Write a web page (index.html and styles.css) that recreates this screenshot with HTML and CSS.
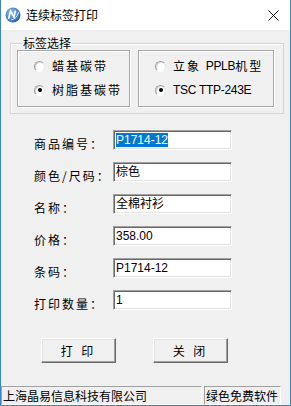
FILE: index.html
```html
<!DOCTYPE html>
<html lang="zh-CN">
<head>
  <meta charset="UTF-8">
  <title>连续标签打印</title>
  <link rel="stylesheet" href="styles.css">
</head>
<body>
  <div class="window">
    <div class="titlebar">
      <svg class="app-icon" width="16" height="16" viewBox="0 0 16 16">
        <defs>
          <radialGradient id="ball" cx="40%" cy="35%" r="70%">
            <stop offset="0" stop-color="#8fc3f0"/>
            <stop offset="1" stop-color="#1c5fb5"/>
          </radialGradient>
        </defs>
        <circle cx="8" cy="8" r="7.5" fill="url(#ball)"/>
        <path d="M3.5 12 L5.5 4 L9 10 L10.5 3.5" fill="none" stroke="#fff" stroke-width="1.6"/>
        <path d="M6 13 Q12 12 13.5 5" fill="none" stroke="#dbeeff" stroke-width="1"/>
      </svg>
      <span class="title">连续标签打印</span>
      <svg class="close" width="11" height="11" viewBox="0 0 11 11">
        <path d="M0.5 0.5 L10.5 10.5 M10.5 0.5 L0.5 10.5" stroke="#111" stroke-width="1"/>
      </svg>
    </div>

    <div class="client">
      <fieldset class="group">
        <legend>标签选择</legend>
        <div class="group-row">
          <div class="radio-box left">
            <div class="radio"><span class="dot"></span><span class="cn">蜡基碳带</span></div>
            <div class="radio"><span class="dot on"></span><span class="cn">树脂基碳带</span></div>
          </div>
          <div class="radio-box right">
            <div class="radio"><span class="dot"></span><span class="cn">立象 </span><span class="en">PPLB</span><span class="cn">机型</span></div>
            <div class="radio"><span class="dot on"></span><span class="en">TSC TTP-243E</span></div>
          </div>
        </div>
      </fieldset>

      <div class="form">
        <label>商品编号：</label>
        <div class="field"><span class="selected">P1714-12</span></div>
        <label>颜色/尺码：</label>
        <div class="field">棕色</div>
        <label>名称：</label>
        <div class="field">全棉衬衫</div>
        <label>价格：</label>
        <div class="field">358.00</div>
        <label>条码：</label>
        <div class="field">P1714-12</div>
        <label>打印数量：</label>
        <div class="field">1</div>
      </div>

      <div class="buttons">
        <button class="btn">打 印</button>
        <button class="btn">关 闭</button>
      </div>

      <div class="statusbar">
        <div class="panel company">上海晶易信息科技有限公司</div>
        <div class="panel note">绿色免费软件</div>
      </div>
    </div>
  </div>
</body>
</html>
```

FILE: styles.css
```css
html, body {
  margin: 0;
  padding: 0;
  background: #f0f0f0;
  font-family: "Liberation Sans", "Noto Sans CJK SC", sans-serif;
  font-size: 12px;
  color: #000;
}

.window {
  width: 291px;
  height: 406px;
  box-sizing: border-box;
  border: 1px solid #3a86c8;
  border-top: none;
  display: flex;
  flex-direction: column;
  background: #f0f0f0;
}

.titlebar {
  height: 30px;
  background: #fff;
  display: flex;
  align-items: center;
  padding-left: 4px;
}

.app-icon {
  margin-right: 5px;
}

.title {
  font-size: 12px;
  line-height: 16px;
  font-family: "Noto Sans CJK SC", sans-serif;
}

.close {
  margin-left: auto;
  margin-right: 11px;
}

.client {
  flex: 1;
  display: flex;
  flex-direction: column;
}

.group {
  margin: 6px 6px 0 9px;
  padding: 0 9px 6px 6px;
  border: 1px solid #d4d4d4;
  box-shadow: inset 1px 1px #fff;
}

.group legend {
  padding: 0 1px;
  margin-left: 5px;
  font-family: "Noto Sans CJK SC", sans-serif;
  line-height: 14px;
}

.group-row {
  display: flex;
  gap: 8px;
}

.radio-box {
  height: 57px;
  box-sizing: border-box;
  border: 1px solid #a8a8a8;
  box-shadow: 1px 1px #fff, inset 1px 1px #fff;
  padding: 7px 0 0 16px;
  display: flex;
  flex-direction: column;
  gap: 8px;
}

.radio-box.left {
  width: 113px;
}

.radio-box.right {
  flex: 1;
}

.radio {
  display: flex;
  align-items: center;
  height: 16px;
  white-space: pre;
}

.dot {
  width: 11px;
  height: 11px;
  box-sizing: border-box;
  border-radius: 50%;
  border: 1px solid;
  border-color: #a0a0a0 #e6e6e6 #fff #a0a0a0;
  background: #fff;
  box-shadow: inset 1px 1px #d8d8d8;
  margin-right: 7px;
  display: flex;
  align-items: center;
  justify-content: center;
}

.dot.on::after {
  content: "";
  width: 4px;
  height: 4px;
  border-radius: 50%;
  background: #000;
}

.cn {
  font-family: "Noto Sans CJK SC", sans-serif;
  font-size: 12px;
  letter-spacing: 2px;
  line-height: 16px;
}

.en {
  font-size: 12px;
  line-height: 16px;
  letter-spacing: -0.3px;
}

.form {
  display: grid;
  grid-template-columns: 79px 119px;
  grid-auto-rows: 20px;
  row-gap: 12px;
  margin-top: 16px;
  padding-left: 33px;
}

.form label {
  font-family: "Noto Sans CJK SC", sans-serif;
  letter-spacing: 2px;
  line-height: 14px;
  padding-top: 7px;
  white-space: nowrap;
}

.field {
  box-sizing: border-box;
  height: 20px;
  background: #fff;
  border: 1px solid;
  border-color: #a0a0a0 #fff #fff #a0a0a0;
  box-shadow: inset 1px 1px #696969, inset -1px -1px #e3e3e3;
  padding: 2px 0 0 2px;
  line-height: 15px;
  font-family: "Liberation Sans", "Noto Sans CJK SC", sans-serif;
  white-space: nowrap;
}

.selected {
  background: #0078d7;
  color: #fff;
}

.buttons {
  display: flex;
  gap: 37px;
  padding-left: 40px;
  margin-top: 28px;
}

.btn {
  width: 75px;
  height: 25px;
  background: #f0f0f0;
  border: 1px solid;
  border-color: #fff #696969 #696969 #fff;
  box-shadow: inset -1px -1px #a0a0a0, inset 1px 1px #e3e3e3;
  font-family: "Noto Sans CJK SC", sans-serif;
  font-size: 12px;
  letter-spacing: 3px;
  padding: 0;
}

.statusbar {
  margin-top: auto;
  height: 19px;
  display: flex;
  gap: 2px;
  padding-right: 9px;
}

.panel {
  box-sizing: border-box;
  height: 19px;
  border: 1px solid;
  border-color: #a0a0a0 #fff #fff #a0a0a0;
  padding-left: 1px;
  font-family: "Noto Sans CJK SC", sans-serif;
  line-height: 17px;
  white-space: nowrap;
  overflow: hidden;
}

.company {
  width: 201px;
}

.note {
  flex: 1;
}
```
